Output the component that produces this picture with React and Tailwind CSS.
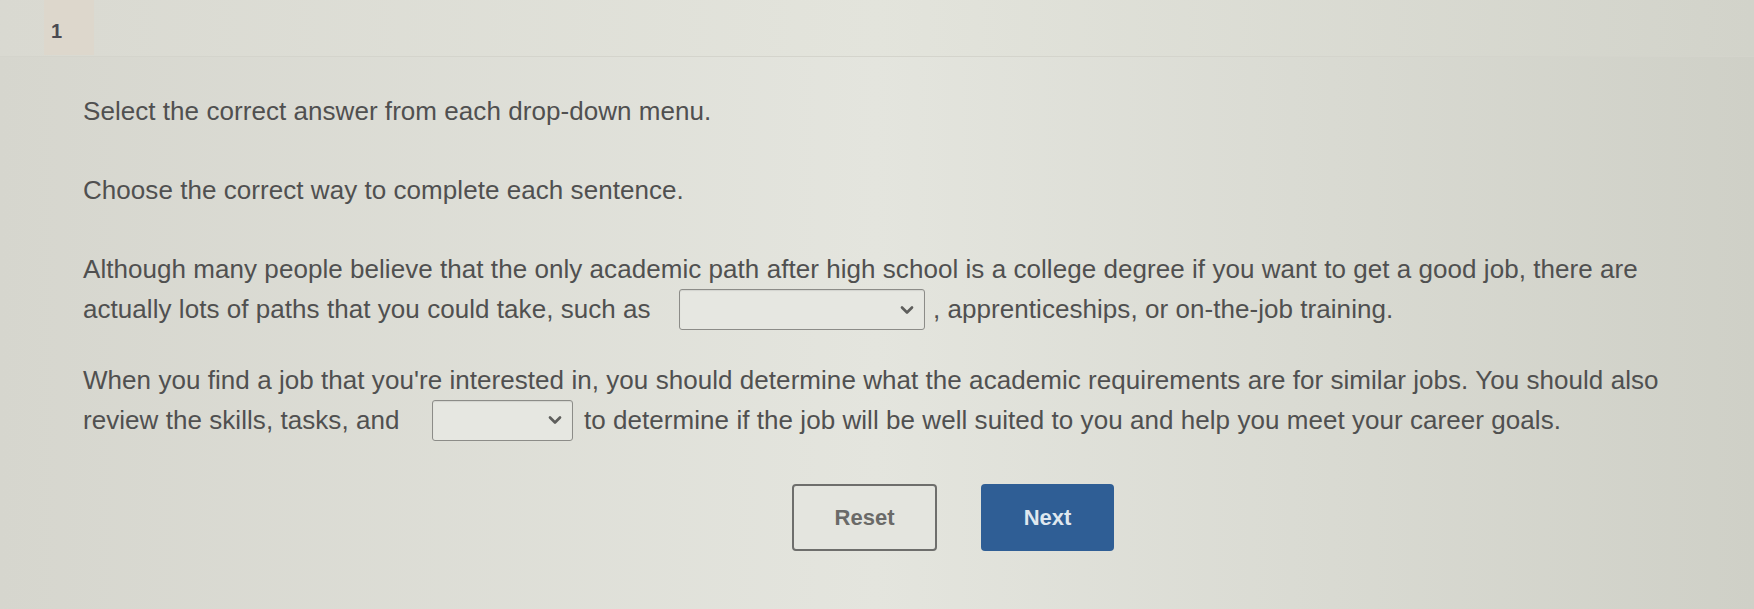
import React from 'react';
import { ChevronDown } from 'lucide-react';

const Dropdown = ({ width, margin }) => (
  <span
    className={`inline-flex h-[41px] shrink-0 ${width} ${margin} items-center justify-end rounded-[3px] border-[1.5px] border-[#8c8c88] bg-[#e6e7e1] pr-[7px] shadow-[inset_0_1px_1px_rgba(0,0,0,0.08)]`}
  >
    <ChevronDown className="h-[20px] w-[20px] text-[#5e5e5c]" strokeWidth={3.2} />
  </span>
);

const App = () => {
  return (
    <div
      className="h-[609px] w-full overflow-hidden bg-linear-to-r from-[#d6d6ce] via-[#e4e5de] to-[#cfd0c7] text-[#505050]"
      style={{ fontFamily: '"Liberation Sans", Arial, sans-serif' }}
    >
      {/* question number strip */}
      <div className="flex h-[57px] items-start border-b border-[#d4d4cc] bg-linear-to-r from-[#d9d9d1] via-[#e3e4dc] to-[#d2d3ca]">
        <div className="ml-[44px] flex h-[55px] w-[50px] items-start bg-[#ddd7cc] pl-[7px] pt-[16px] text-[20px] font-bold text-[#4a4a52]">
          1
        </div>
      </div>

      <div className="pl-[83px] text-[26px] tracking-[0.05px]">
        <p className="mt-[34px] flex h-[40px] items-center">Select the correct answer from each drop-down menu.</p>
        <p className="mt-[39px] flex h-[40px] items-center">Choose the correct way to complete each sentence.</p>

        <div className="mt-[39px]">
          <p className="flex h-[40px] items-center">
            Although many people believe that the only academic path after high school is a college degree if you want to get a good job, there are
          </p>
          <p className="flex h-[41px] items-center whitespace-pre">
            <span className="w-[596px] shrink-0">actually lots of paths that you could take, such as</span>
            <Dropdown width="w-[246px]" margin="mr-[8px]" />
            <span>, apprenticeships, or on-the-job training.</span>
          </p>
        </div>

        <div className="mt-[30px]">
          <p className="flex h-[40px] items-center">
            When you find a job that you're interested in, you should determine what the academic requirements are for similar jobs. You should also
          </p>
          <p className="flex h-[40px] items-center whitespace-pre">
            <span className="w-[349px] shrink-0">review the skills, tasks, and</span>
            <Dropdown width="w-[141px]" margin="mr-[11px]" />
            <span>to determine if the job will be well suited to you and help you meet your career goals.</span>
          </p>
        </div>
      </div>

      <div className="mt-[44px] flex gap-[44px] pl-[792px]">
        <button className="h-[67px] w-[145px] rounded-[4px] border-2 border-[#6e6e6c] bg-[#e4e5df] text-[22px] font-bold text-[#6a6a68]">
          Reset
        </button>
        <button className="h-[67px] w-[133px] rounded-[4px] bg-[#2f5e95] text-[22px] font-bold text-[#dfe7ef]">
          Next
        </button>
      </div>
    </div>
  );
};

export default App;
